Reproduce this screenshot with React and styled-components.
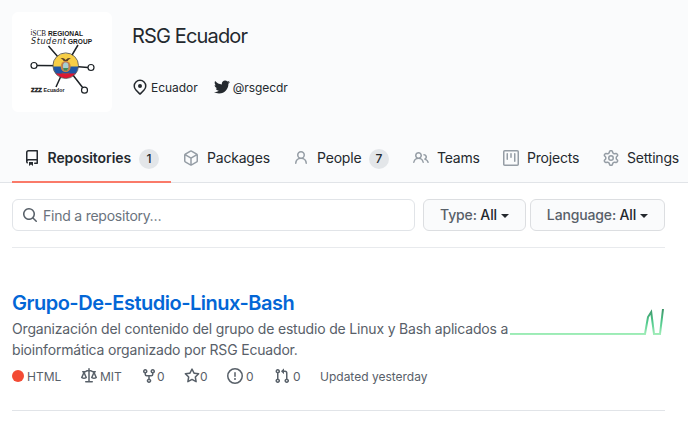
import React from "react";
import styled, { createGlobalStyle } from "styled-components";
import { FaTwitter } from "react-icons/fa";

const GlobalStyle = createGlobalStyle`
  * { box-sizing: border-box; }
  body {
    margin: 0;
    background: #fff;
    color: #24292e;
    font-family: Inter, "Liberation Sans", sans-serif;
    font-size: 14px;
    overflow: hidden;
  }
`;

const paths = {
  repo: "M2 2.5A2.5 2.5 0 014.5 0h8.75a.75.75 0 01.75.75v12.5a.75.75 0 01-.75.75h-2.5a.75.75 0 110-1.5h1.75v-2h-8a1 1 0 00-.714 1.7.75.75 0 01-1.072 1.05A2.495 2.495 0 012 11.5v-9zm10.5-1V9h-8c-.356 0-.694.074-1 .208V2.5a1 1 0 011-1h8zM5 12.25v3.25a.25.25 0 00.4.2l1.45-1.087a.25.25 0 01.3 0L8.6 15.7a.25.25 0 00.4-.2v-3.25a.25.25 0 00-.25-.25h-3.5a.25.25 0 00-.25.25z",
  package: "M8.878.392a1.75 1.75 0 00-1.756 0l-5.25 3.045A1.75 1.75 0 001 4.951v6.098c0 .624.332 1.2.872 1.514l5.25 3.045a1.75 1.75 0 001.756 0l5.25-3.045c.54-.313.872-.89.872-1.514V4.951c0-.624-.332-1.2-.872-1.514L8.878.392zM7.875 1.69a.25.25 0 01.25 0l4.63 2.685L8 7.133 3.245 4.375l4.63-2.685zM2.5 5.677v5.372c0 .09.047.171.125.216l4.625 2.683V8.432L2.5 5.677zm6.25 8.271l4.625-2.683a.25.25 0 00.125-.216V5.677L8.75 8.432v5.516z",
  person: "M10.5 5a2.5 2.5 0 11-5 0 2.5 2.5 0 015 0zm.061 3.073a4 4 0 10-5.123 0 6.004 6.004 0 00-3.431 5.142.75.75 0 001.498.07 4.5 4.5 0 018.99 0 .75.75 0 101.498-.07 6.005 6.005 0 00-3.432-5.142z",
  people: "M5.5 3.5a2 2 0 100 4 2 2 0 000-4zM2 5.5a3.5 3.5 0 115.898 2.549 5.507 5.507 0 013.034 4.084.75.75 0 11-1.482.235 4.001 4.001 0 00-7.9 0 .75.75 0 01-1.482-.236A5.507 5.507 0 013.102 8.05 3.49 3.49 0 012 5.5zM11 4a.75.75 0 100 1.5 1.5 1.5 0 01.666 2.844.75.75 0 00-.416.672v.352a.75.75 0 00.574.73c1.2.289 2.162 1.2 2.522 2.372a.75.75 0 101.434-.44 5.01 5.01 0 00-2.56-3.012A3 3 0 0011 4z",
  project: "M1.75 0A1.75 1.75 0 000 1.75v12.5C0 15.216.784 16 1.75 16h12.5A1.75 1.75 0 0016 14.25V1.75A1.75 1.75 0 0014.25 0H1.75zM1.5 1.75a.25.25 0 01.25-.25h12.5a.25.25 0 01.25.25v12.5a.25.25 0 01-.25.25H1.75a.25.25 0 01-.25-.25V1.75zM11.75 3a.75.75 0 00-.75.75v7.5a.75.75 0 001.5 0v-7.5a.75.75 0 00-.75-.75zm-8.25.75a.75.75 0 011.5 0v5.5a.75.75 0 01-1.5 0v-5.5zM8 3a.75.75 0 00-.75.75v3.5a.75.75 0 001.5 0v-3.5A.75.75 0 008 3z",
  gear: "M7.429 1.525a6.593 6.593 0 011.142 0c.036.003.108.036.137.146l.289 1.105c.147.56.55.967.997 1.189.174.086.341.183.501.29.417.278.97.423 1.53.27l1.102-.303c.11-.03.175.016.195.046.219.31.41.641.573.989.014.031.022.11-.059.19l-.815.806c-.411.406-.562.957-.53 1.456a4.588 4.588 0 010 .582c-.032.499.119 1.05.53 1.456l.815.806c.08.08.073.159.059.19a6.494 6.494 0 01-.573.99c-.02.029-.086.074-.195.045l-1.103-.303c-.559-.153-1.112-.008-1.529.27-.16.107-.327.204-.5.29-.449.222-.851.628-.998 1.189l-.289 1.105c-.029.11-.101.143-.137.146a6.613 6.613 0 01-1.142 0c-.036-.003-.108-.037-.137-.146l-.289-1.105c-.147-.56-.55-.967-.997-1.189a4.502 4.502 0 01-.501-.29c-.417-.278-.97-.423-1.53-.27l-1.102.303c-.11.03-.175-.016-.195-.046a6.492 6.492 0 01-.573-.989c-.014-.031-.022-.11.059-.19l.815-.806c.411-.406.562-.957.53-1.456a4.587 4.587 0 010-.582c.032-.499-.119-1.05-.53-1.456l-.815-.806c-.08-.08-.073-.159-.059-.19a6.44 6.44 0 01.573-.99c.02-.029.086-.075.195-.045l1.103.303c.559.153 1.112.008 1.529-.27.16-.107.327-.204.5-.29.449-.222.851-.628.998-1.189l.289-1.105c.029-.11.101-.143.137-.146zM8 0c-.236 0-.47.01-.701.03-.743.065-1.29.615-1.458 1.261l-.29 1.106c-.017.066-.078.158-.211.224a5.994 5.994 0 00-.668.386c-.123.082-.233.09-.3.071L3.27 2.776c-.644-.177-1.392.02-1.82.63a7.977 7.977 0 00-.704 1.217c-.315.675-.111 1.422.363 1.891l.815.806c.05.048.098.147.088.294a6.084 6.084 0 000 .772c.01.147-.038.246-.088.294l-.815.806c-.474.469-.678 1.216-.363 1.891.2.428.436.835.704 1.218.428.609 1.176.806 1.82.63l1.103-.303c.066-.019.176-.011.299.071.213.143.436.272.668.386.133.066.194.158.212.224l.289 1.106c.169.646.715 1.196 1.458 1.26a8.094 8.094 0 001.402 0c.743-.064 1.29-.614 1.458-1.26l.29-1.106c.017-.066.078-.158.211-.224a5.98 5.98 0 00.668-.386c.123-.082.233-.09.3-.071l1.102.302c.644.177 1.392-.02 1.82-.63.268-.382.505-.789.704-1.217.315-.675.111-1.422-.364-1.891l-.814-.806c-.05-.048-.098-.147-.088-.294a6.1 6.1 0 000-.772c-.01-.147.039-.246.088-.294l.814-.806c.475-.469.679-1.216.364-1.891a7.992 7.992 0 00-.704-1.218c-.428-.609-1.176-.806-1.82-.63l-1.103.303c-.066.019-.176.011-.299-.071a5.991 5.991 0 00-.668-.386c-.133-.066-.194-.158-.212-.224L10.16 1.29C9.99.645 9.444.095 8.701.031A8.094 8.094 0 008 0zm1.5 8a1.5 1.5 0 11-3 0 1.5 1.5 0 013 0zM11 8a3 3 0 11-6 0 3 3 0 016 0z",
  location: "M11.536 3.464a5 5 0 010 7.072L8 14.07l-3.536-3.535a5 5 0 117.072-7.072v.001zm1.06 8.132a6.5 6.5 0 10-9.192 0l3.535 3.536a1.5 1.5 0 002.122 0l3.535-3.536zM8 9a2 2 0 100-4 2 2 0 000 4z",
  search: "M11.5 7a4.499 4.499 0 11-8.998 0A4.499 4.499 0 0111.5 7zm-.82 4.74a6 6 0 111.06-1.06l3.04 3.04a.75.75 0 11-1.06 1.06l-3.04-3.04z",
  law: "M8.75.75a.75.75 0 00-1.5 0V2h-.984c-.305 0-.604.08-.869.23l-1.288.737A.25.25 0 013.984 3H1.75a.75.75 0 000 1.5h.428L.066 9.192a.75.75 0 00.154.838l.53-.53-.53.53v.001l.002.002.002.002.006.006.016.015.045.04a3.514 3.514 0 00.686.45A4.492 4.492 0 003 11c.88 0 1.556-.22 2.023-.454a3.515 3.515 0 00.686-.45l.045-.04.016-.015.006-.006.002-.002.001-.002L5.25 9.5l.53.53a.75.75 0 00.154-.838L3.822 4.5h.162c.305 0 .604-.08.869-.23l1.289-.737a.25.25 0 01.124-.033h.984V13h-2.5a.75.75 0 000 1.5h6.5a.75.75 0 000-1.5h-2.5V3.5h.984a.25.25 0 01.124.033l1.29.736c.264.152.563.231.868.231h.162l-2.112 4.692a.75.75 0 00.154.838l.53-.53-.53.53v.001l.002.002.002.002.006.006.016.015.045.04a3.517 3.517 0 00.686.45A4.492 4.492 0 0013 11c.88 0 1.556-.22 2.023-.454a3.512 3.512 0 00.686-.45l.045-.04.01-.01.006-.005.006-.006.002-.002.001-.002-.529-.531.53.53a.75.75 0 00.154-.838L13.823 4.5h.427a.75.75 0 000-1.5h-2.234a.25.25 0 01-.124-.033l-1.29-.736A1.75 1.75 0 009.735 2H8.75V.75zM1.695 9.227c.285.135.718.273 1.305.273s1.02-.138 1.305-.273L3 6.327l-1.305 2.9zm10 0c.285.135.718.273 1.305.273s1.02-.138 1.305-.273L13 6.327l-1.305 2.9z",
  fork: "M5 3.25a.75.75 0 11-1.5 0 .75.75 0 011.5 0zm0 2.122a2.25 2.25 0 10-1.5 0v.878A2.25 2.25 0 005.75 8.5h1.5v2.128a2.251 2.251 0 101.5 0V8.5h1.5a2.25 2.25 0 002.25-2.25v-.878a2.25 2.25 0 10-1.5 0v.878a.75.75 0 01-.75.75h-4.5A.75.75 0 015 6.25v-.878zm3.75 7.378a.75.75 0 11-1.5 0 .75.75 0 011.5 0zm3-8.75a.75.75 0 100-1.5.75.75 0 000 1.5z",
  star: "M8 .25a.75.75 0 01.673.418l1.882 3.815 4.21.612a.75.75 0 01.416 1.279l-3.046 2.97.719 4.192a.75.75 0 01-1.088.791L8 12.347l-3.766 1.98a.75.75 0 01-1.088-.79l.72-4.194L.818 6.374a.75.75 0 01.416-1.28l4.21-.611L7.327.668A.75.75 0 018 .25zm0 2.445L6.615 5.5a.75.75 0 01-.564.41l-3.097.45 2.24 2.184a.75.75 0 01.216.664l-.528 3.084 2.769-1.456a.75.75 0 01.698 0l2.77 1.456-.53-3.084a.75.75 0 01.216-.664l2.24-2.183-3.096-.45a.75.75 0 01-.564-.41L8 2.694v.001z",
  issue: "M8 1.5a6.5 6.5 0 100 13 6.5 6.5 0 000-13zM0 8a8 8 0 1116 0A8 8 0 010 8zm9 3a1 1 0 11-2 0 1 1 0 012 0zm-.25-6.25a.75.75 0 00-1.5 0v3.5a.75.75 0 001.5 0v-3.5z",
  pull: "M7.177 3.073L9.573.677A.25.25 0 0110 .854v4.792a.25.25 0 01-.427.177L7.177 3.427a.25.25 0 010-.354zM3.75 2.5a.75.75 0 100 1.5.75.75 0 000-1.5zm-2.25.75a2.25 2.25 0 113 2.122v5.256a2.251 2.251 0 11-1.5 0V5.372A2.25 2.25 0 011.5 3.25zM11 2.5h-1V4h1a1 1 0 011 1v5.628a2.251 2.251 0 101.5 0V5A2.5 2.5 0 0011 2.5zm1 10.25a.75.75 0 111.5 0 .75.75 0 01-1.5 0zM3.75 12a.75.75 0 100 1.5.75.75 0 000-1.5z",
};

const IconSvg = styled.svg`
  flex: none;
  display: block;
  fill: currentColor;
`;

const Icon = ({ name }) => (
  <IconSvg width="16" height="16" viewBox="0 0 16 16">
    <path fillRule="evenodd" d={paths[name]} />
  </IconSvg>
);

const Page = styled.div`
  width: 688px;
  height: 422px;
  overflow: hidden;
`;

const Header = styled.header`
  height: 183px;
  background: #fafbfc;
  border-bottom: 1px solid #e1e4e8;
  display: flex;
  flex-direction: column;
  justify-content: space-between;
`;

const Profile = styled.div`
  display: flex;
  gap: 20px;
  padding: 12px 12px 0;
`;

const Avatar = styled.div`
  width: 100px;
  height: 100px;
  border-radius: 6px;
  background: #fff;
  overflow: hidden;
`;

const ProfileText = styled.div`
  padding-top: 9px;
`;

const OrgName = styled.h1`
  margin: 0;
  font-size: 20px;
  line-height: 30px;
  font-weight: 400;
  letter-spacing: -0.85px;
`;

const Facts = styled.div`
  display: flex;
  gap: 16px;
  margin-top: 27px;
`;

const Fact = styled.div`
  display: flex;
  align-items: center;
  gap: 3px;
  height: 18px;
  font-size: 12px;
  letter-spacing: -0.05px;
`;

const Tabs = styled.nav`
  display: flex;
  height: 48px;
  padding-left: 12px;
  margin-bottom: -1px;
`;

const Tab = styled.a`
  flex: none;
  width: ${(p) => p.$width}px;
  display: flex;
  align-items: center;
  padding-left: 12px;
  border-bottom: 2px solid ${(p) => (p.$active ? "#fa7a69" : "transparent")};
  font-weight: ${(p) => (p.$active ? 600 : 400)};
  letter-spacing: ${(p) => (p.$active ? -0.08 : -0.2)}px;
  white-space: nowrap;
  svg {
    margin-right: ${(p) => (p.$active ? 7.5 : 8)}px;
    color: ${(p) => (p.$active ? "#24292e" : "#959da5")};
  }
`;

const TabLabel = styled.span`
  padding-bottom: 2px;
`;

const Counter = styled.span`
  width: 20px;
  height: 20px;
  margin: 2px 12px 0 auto;
  border-radius: 10px;
  background: #e3e6e9;
  font-size: 12px;
  line-height: 20px;
  font-weight: 500;
  letter-spacing: 0;
  text-align: center;
`;

const Main = styled.main`
  width: 665px;
  padding: 16px 0 0 12px;
`;

const Filters = styled.div`
  display: flex;
  height: 49px;
  align-items: flex-start;
  border-bottom: 1px solid #e8eaed;
`;

const SearchBox = styled.div`
  width: 403px;
  height: 32px;
  margin-right: 8px;
  padding-left: 9px;
  display: flex;
  align-items: center;
  gap: 5px;
  border: 1px solid #e1e4e8;
  border-radius: 6px;
  color: #586069;
  letter-spacing: -0.23px;
  span { color: #6a737d; }
`;

const FilterButton = styled.button`
  width: ${(p) => p.$width}px;
  height: 32px;
  margin-right: 4px;
  padding: 0 0 1px;
  display: flex;
  align-items: center;
  justify-content: center;
  gap: 4px;
  border: 1px solid #dcdee1;
  border-radius: 6px;
  background: #fafbfc;
  color: #24292e;
  font: 500 14px Inter, "Liberation Sans", sans-serif;
  letter-spacing: -0.15px;
  white-space: nowrap;
  &:last-child { margin-right: 0; }
`;

const Muted = styled.span`
  color: #586069;
`;

const Caret = styled.i`
  margin-top: 2px;
  border: 4px solid transparent;
  border-top-color: currentColor;
  border-bottom: 0;
`;

const Repo = styled.article`
  height: 163px;
  padding-top: 40px;
  border-bottom: 1px solid #e1e4e8;
  color: #586069;
`;

const RepoTitle = styled.h3`
  margin: 0;
  font-size: 20px;
  line-height: 30px;
  font-weight: 600;
  letter-spacing: -0.49px;
  color: #0366d6;
`;

const Summary = styled.div`
  display: flex;
  height: 42px;
`;

const Description = styled.p`
  width: 498px;
  margin: 0;
  line-height: 21px;
  letter-spacing: -0.18px;
  white-space: nowrap;
`;

const Sparkline = styled.svg`
  flex: none;
  display: block;
  margin-top: -12px;
`;

const Meta = styled.div`
  display: flex;
  margin-top: 7px;
  font-size: 12px;
`;

const MetaItem = styled.span`
  width: ${(p) => p.$width}px;
  height: 18px;
  display: flex;
  align-items: center;
  gap: ${(p) => p.$gap || 0}px;
  white-space: nowrap;
`;

const Dot = styled.i`
  width: 12px;
  height: 12px;
  border-radius: 50%;
  background: #f34b34;
`;

const OrgLogo = () => (
  <svg width="100" height="100" viewBox="0 0 100 100">
    <defs>
      <clipPath id="disc">
        <circle cx="53.7" cy="53.7" r="12.5" />
      </clipPath>
    </defs>
    <g stroke="#1d2226" strokeWidth="1.5" fill="#fff">
      <path d="M36.5 34 53.7 53.7 66 33M25 53.5 53.7 53.7 76 55.5M44 75 53.7 53.7 71 76" fill="none" />
      <circle cx="22" cy="53.5" r="3" strokeWidth="1.2" />
      <circle cx="79" cy="55.5" r="3" strokeWidth="1.2" />
      <circle cx="72.5" cy="78.2" r="3" strokeWidth="1.2" />
    </g>
    <g clipPath="url(#disc)">
      <rect x="41" y="41" width="26" height="14" fill="#f7ce46" />
      <rect x="41" y="54.5" width="26" height="7.5" fill="#1f56a5" />
      <rect x="41" y="61.5" width="26" height="6" fill="#df1632" />
    </g>
    <circle cx="53.7" cy="53.7" r="12.8" fill="none" stroke="#4b4a46" strokeWidth="0.8" />
    <ellipse cx="53.7" cy="54.5" rx="5" ry="5.6" fill="#c98c43" />
    <ellipse cx="53.7" cy="54.3" rx="3.2" ry="4.3" fill="#a5d0d2" stroke="#b94b3d" strokeWidth="0.6" />
    <path d="M51 56h5.400l-1.500 2.400h-2.600z" fill="#3c8b58" />
    <path d="M48.500 46.500q3-1.500 5.200 1.500 2.200-3 5.200-1.500-2.500.5-3.200 2.600h-4q-.7-2.100-3.200-2.600z" fill="#5b3f26" />
    <path d="M49.500 60q4.200 3 8.400 0l-1 1.800q-3.200 1.300-6.400 0z" fill="#a9463c" />
    <g fill="#1b1b1b">
      <text x="18.500" y="24" fontFamily="Liberation Serif" fontSize="8.500" textLength="15.500" lengthAdjust="spacingAndGlyphs">
        <tspan dy="-1">i</tspan>
        <tspan dy="1">SCB</tspan>
      </text>
      <text x="36" y="24" fontFamily="Liberation Sans" fontWeight="700" fontSize="7" textLength="35" lengthAdjust="spacingAndGlyphs">REGIONAL</text>
      <text x="19" y="32" fontFamily="DejaVu Sans" fontStyle="italic" fontSize="8" textLength="35" lengthAdjust="spacing">Student</text>
      <text x="56" y="32" fontFamily="Liberation Sans" fontWeight="700" fontSize="7" textLength="24" lengthAdjust="spacingAndGlyphs">GROUP</text>
      <text x="19" y="79.700" fontFamily="Liberation Sans" fontWeight="700" fontSize="5.500" stroke="#1b1b1b" strokeWidth="0.4" textLength="11" lengthAdjust="spacingAndGlyphs">ZZZ</text>
      <text x="31.500" y="79.500" fontFamily="Liberation Sans" fontWeight="700" fontSize="5.200" textLength="21" lengthAdjust="spacingAndGlyphs">Ecuador</text>
    </g>
  </svg>
);

const tabs = [
  { label: "Repositories", icon: "repo", count: 1, width: 159, active: true },
  { label: "Packages", icon: "package", width: 110 },
  { label: "People", icon: "person", count: 7, width: 120 },
  { label: "Teams", icon: "people", width: 90 },
  { label: "Projects", icon: "project", width: 100 },
  { label: "Settings", icon: "gear", width: 90 },
];

const counts = [
  { icon: "fork", width: 43 },
  { icon: "star", width: 43 },
  { icon: "issue", width: 47, gap: 3 },
  { icon: "pull", width: 46, gap: 3 },
];

export default function App() {
  return (
    <Page>
      <GlobalStyle />
      <Header>
        <Profile>
          <Avatar>
            <OrgLogo />
          </Avatar>
          <ProfileText>
            <OrgName>RSG Ecuador</OrgName>
            <Facts>
              <Fact>
                <Icon name="location" />
                Ecuador
              </Fact>
              <Fact>
                <FaTwitter size={16} />
                @rsgecdr
              </Fact>
            </Facts>
          </ProfileText>
        </Profile>
        <Tabs>
          {tabs.map((t) => (
            <Tab key={t.label} $width={t.width} $active={t.active}>
              <Icon name={t.icon} />
              <TabLabel>{t.label}</TabLabel>
              {t.count && <Counter>{t.count}</Counter>}
            </Tab>
          ))}
        </Tabs>
      </Header>
      <Main>
        <Filters>
          <SearchBox>
            <Icon name="search" />
            <span>Find a repository…</span>
          </SearchBox>
          <FilterButton $width={103}>
            <span><Muted>Type:</Muted> All</span>
            <Caret />
          </FilterButton>
          <FilterButton $width={135}>
            <span><Muted>Language:</Muted> All</span>
            <Caret />
          </FilterButton>
        </Filters>
        <Repo>
          <RepoTitle>Grupo-De-Estudio-Linux-Bash</RepoTitle>
          <Summary>
            <Description>
              Organización del contenido del grupo de estudio de Linux y Bash aplicados a
              <br />
              bioinformática organizado por RSG Ecuador.
            </Description>
            <Sparkline width="155" height="30" viewBox="0 0 155 30">
              <defs>
                <linearGradient id="activity" gradientUnits="userSpaceOnUse" x1="0" y1="29" x2="0" y2="3">
                  <stop offset="0" stopColor="#a5efbb" />
                  <stop offset="0.5" stopColor="#4fc98c" />
                  <stop offset="1" stopColor="#3f9469" />
                </linearGradient>
              </defs>
              <polyline points="0,28.010 135,28 138,11 141.200,6 144,28 150,28 153,3" fill="none" stroke="url(#activity)" strokeWidth="2" />
            </Sparkline>
          </Summary>
          <Meta>
            <MetaItem $width={69} $gap={3}>
              <Dot />
              HTML
            </MetaItem>
            <MetaItem $width={60} $gap={3}>
              <Icon name="law" />
              MIT
            </MetaItem>
            {counts.map((c) => (
              <MetaItem key={c.icon} $width={c.width} $gap={c.gap}>
                <Icon name={c.icon} />0
              </MetaItem>
            ))}
            <MetaItem>Updated yesterday</MetaItem>
          </Meta>
        </Repo>
      </Main>
    </Page>
  );
}
